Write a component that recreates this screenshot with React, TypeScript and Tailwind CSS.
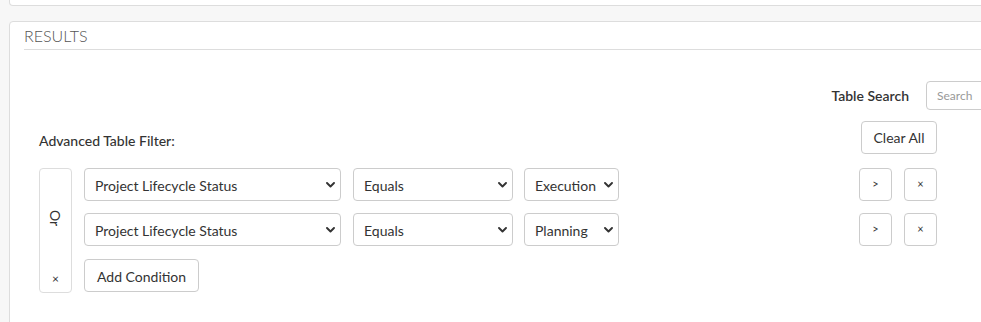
import React from "react";

function Chevron() {
  return (
    <svg width="9" height="6" viewBox="0 0 9 6" className="shrink-0">
      <path d="M1 1 L4.5 4.5 L8 1" fill="none" stroke="#333" strokeWidth="1.9" strokeLinecap="round" strokeLinejoin="round" />
    </svg>
  );
}

function FakeSelect({ value, width }: { value: string; width: string }) {
  return (
    <div
      className={`${width} h-[33px] flex items-center justify-between pl-[10px] pr-[5px] pt-[1px] border border-[#ccc] rounded-[4px] bg-white text-[14px] text-[#333]`}
    >
      <span className="whitespace-nowrap">{value}</span>
      <Chevron />
    </div>
  );
}

function SmallBtn({ label }: { label: string }) {
  return (
    <button className="w-[33px] h-[33px] flex items-center justify-center border border-[#ccc] rounded-[4px] bg-white text-[11px] text-[#333]">
      {label}
    </button>
  );
}

export default function App() {
  const rows = [
    { field: "Project Lifecycle Status", op: "Equals", val: "Execution" },
    { field: "Project Lifecycle Status", op: "Equals", val: "Planning" },
  ];
  return (
    <div className="w-[981px] h-[322px] overflow-hidden bg-[#f7f7f7] font-['Lato',sans-serif] text-[#333]">
      <div className="pl-[9px]">
        <div className="w-[1000px] h-[6px] bg-white border border-t-0 border-[#ddd] rounded-b-[4px]" />
        <div className="mt-[15px] w-[1000px] h-[320px] bg-white border border-[#ddd] rounded-[4px]">
          <div className="ml-[14px] pt-[3px] pb-[2px] border-b border-[#ddd] text-[16px] leading-[22px] font-light text-[#555]">
            RESULTS
          </div>
          <div className="pl-[29px] pt-[31px] w-[927px]">
            <div className="flex justify-end items-center h-[29px]">
              <span className="text-[14px] font-semibold mr-[17px] whitespace-nowrap">Table Search</span>
              <input
                placeholder="Search"
                className="-mr-[69px] w-[80px] h-[29px] border border-[#ccc] rounded-[4px] pl-[10px] text-[12px] placeholder:text-[#999] outline-none"
              />
            </div>
            <div className="mt-[11px] flex justify-between items-start">
              <div>
                <div className="mt-[10px] mb-[17px] text-[14px] leading-[20px] font-medium">Advanced Table Filter:</div>
                <div className="flex gap-[12px]">
                  <div className="w-[33px] h-[125px] border border-[#ddd] rounded-[4px] flex flex-col items-center">
                    <div className="flex-1 flex items-center justify-center pt-[2px]">
                      <span className="rotate-90 text-[14px] leading-none">Or</span>
                    </div>
                    <div className="h-[28px] flex items-start justify-center text-[12px] leading-none pt-[9px]">×</div>
                  </div>
                  <div className="flex flex-col gap-[12px]">
                    {rows.map((r, i) => (
                      <div key={i} className="flex">
                        <FakeSelect value={r.field} width="w-[257px]" />
                        <div className="ml-[12px]">
                          <FakeSelect value={r.op} width="w-[160px]" />
                        </div>
                        <div className="ml-[11px]">
                          <FakeSelect value={r.val} width="w-[95px]" />
                        </div>
                      </div>
                    ))}
                    <div className="pt-[1px]">
                      <button className="h-[33px] px-[12px] pt-[1px] border border-[#ccc] rounded-[4px] bg-white text-[14px] text-[#333]">
                        Add Condition
                      </button>
                    </div>
                  </div>
                </div>
              </div>
              <div className="flex flex-col items-end">
                <button className="w-[76px] h-[33px] border border-[#ccc] rounded-[4px] bg-white text-[14px] text-[#333]">
                  Clear All
                </button>
                <div className="mt-[14px] flex flex-col gap-[12px]">
                  {rows.map((_, i) => (
                    <div key={i} className="flex gap-[12px]">
                      <SmallBtn label=">" />
                      <SmallBtn label="×" />
                    </div>
                  ))}
                </div>
              </div>
            </div>
          </div>
        </div>
      </div>
    </div>
  );
}
